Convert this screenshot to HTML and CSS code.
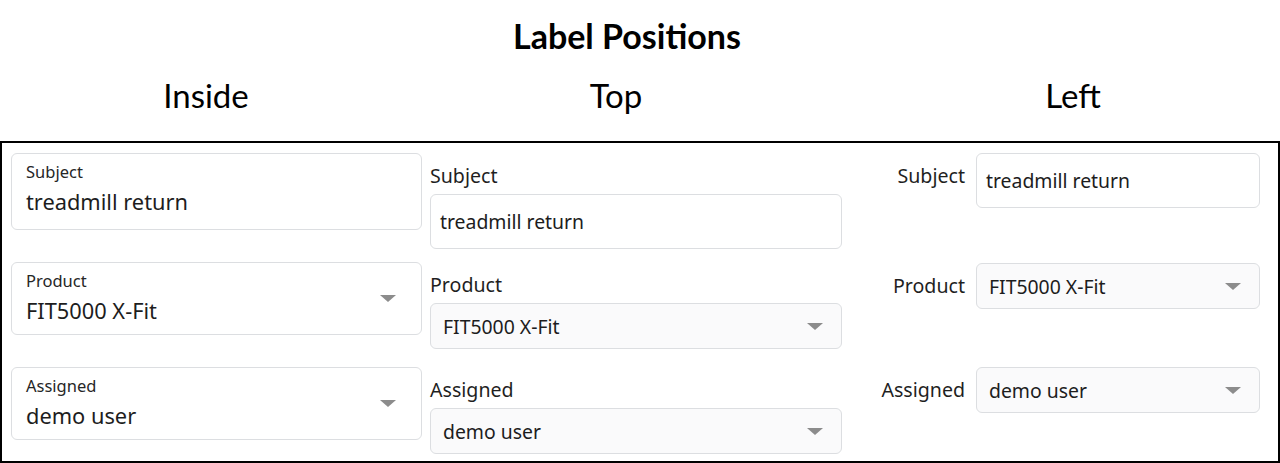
FILE: index.html
```html
<!DOCTYPE html>
<html lang="en">
<head>
<meta charset="utf-8">
<title>Label Positions</title>
<link rel="stylesheet" href="styles.css">
</head>
<body>
<h1 class="title">Label Positions</h1>
<div class="heads">
  <div class="head">Inside</div>
  <div class="head">Top</div>
  <div class="head head-left">Left</div>
</div>
<div class="panel">
  <!-- row 1 -->
  <div class="in-field in-input">
    <div class="in-body">
      <div class="in-label">Subject</div>
      <div class="in-value">treadmill return</div>
    </div>
  </div>
  <div class="top-cell">
    <div class="top-label">Subject</div>
    <div class="box box-input">treadmill return</div>
  </div>
  <div class="left-cell">
    <div class="left-label">Subject</div>
    <div class="box box-input">treadmill return</div>
  </div>

  <!-- row 2 -->
  <div class="in-field in-select">
    <div class="in-body">
      <div class="in-label">Product</div>
      <div class="in-value">FIT5000 X-Fit</div>
    </div>
    <span class="arrow"></span>
  </div>
  <div class="top-cell">
    <div class="top-label">Product</div>
    <div class="box box-select"><span class="box-text">FIT5000 X-Fit</span><span class="arrow"></span></div>
  </div>
  <div class="left-cell left-cell-2">
    <div class="left-label">Product</div>
    <div class="box box-select"><span class="box-text">FIT5000 X-Fit</span><span class="arrow"></span></div>
  </div>

  <!-- row 3 -->
  <div class="in-field in-select">
    <div class="in-body">
      <div class="in-label">Assigned</div>
      <div class="in-value">demo user</div>
    </div>
    <span class="arrow"></span>
  </div>
  <div class="top-cell">
    <div class="top-label">Assigned</div>
    <div class="box box-select"><span class="box-text">demo user</span><span class="arrow"></span></div>
  </div>
  <div class="left-cell">
    <div class="left-label">Assigned</div>
    <div class="box box-select"><span class="box-text">demo user</span><span class="arrow"></span></div>
  </div>
</div>
</body>
</html>
```
FILE: styles.css
```css
* { box-sizing: border-box; }

html, body {
  margin: 0;
  padding: 0;
  background: #ffffff;
}

body {
  width: 1280px;
  height: 463px;
  overflow: hidden;
  font-family: "Noto Sans", "Open Sans", sans-serif;
  color: #1d1d1d;
}

.title {
  margin: 0;
  padding: 17px 26px 0 0;
  font-family: Lato, "Noto Sans", sans-serif;
  font-weight: 700;
  font-size: 34px;
  line-height: 38px;
  text-align: center;
  color: #000;
}

.heads {
  display: grid;
  grid-template-columns: 412px 408px 1fr;
  margin-top: 20px;
  height: 40px;
}

.head {
  font-family: Lato, "Noto Sans", sans-serif;
  font-weight: 400;
  font-size: 33px;
  line-height: 40px;
  text-align: center;
  color: #000;
}

.head-left { padding-left: 46px; }

.panel {
  margin-top: 26px;
  border: 2px solid #000;
  padding: 10px 18px 7px 9px;
  display: grid;
  grid-template-columns: 411px 412px 1fr;
  grid-template-rows: 109px 105px auto;
  column-gap: 8px;
  align-items: start;
}

/* ---------- Inside ---------- */
.in-field {
  display: flex;
  align-items: center;
  border: 1px solid #dcdee1;
  border-radius: 6px;
  background: #fff;
  padding: 8px 25px 12px 14px;
}

.in-select { padding-bottom: 8px; }

.in-body { flex: 1; }

.in-label {
  font-size: 16.5px;
  line-height: 20px;
  margin-bottom: 5px;
  color: #262626;
}

.in-value {
  font-size: 21.8px;
  line-height: 30px;
  color: #1d1d1d;
}

/* ---------- Top ---------- */
.top-cell {
  padding-top: 10px;
}

.top-label {
  font-size: 19.6px;
  line-height: 26px;
  margin-bottom: 5px;
  color: #1f1f1f;
}

.box {
  display: flex;
  align-items: center;
  border: 1px solid #dcdee1;
  border-radius: 6px;
  font-size: 19.4px;
  color: #1d1d1d;
}

.box-input {
  height: 55px;
  background: #fff;
  padding: 0 10px 0 9px;
}

.box-select {
  height: 46px;
  background: #fafafb;
  padding: 0 18px 0 12px;
}

.box-text { flex: 1; }

/* ---------- Left ---------- */
.left-cell {
  display: flex;
  align-items: flex-start;
  gap: 11px;
}

.left-cell-2 { margin-top: 1px; }

.left-cell .box { width: 284px; }

.left-label {
  flex: 1;
  padding-top: 10px;
  text-align: right;
  font-size: 19.6px;
  line-height: 26px;
  color: #1f1f1f;
}

/* ---------- Arrow ---------- */
.arrow {
  width: 0;
  height: 0;
  border-left: 8px solid transparent;
  border-right: 8px solid transparent;
  border-top: 7px solid #8c8c8c;
}
```
